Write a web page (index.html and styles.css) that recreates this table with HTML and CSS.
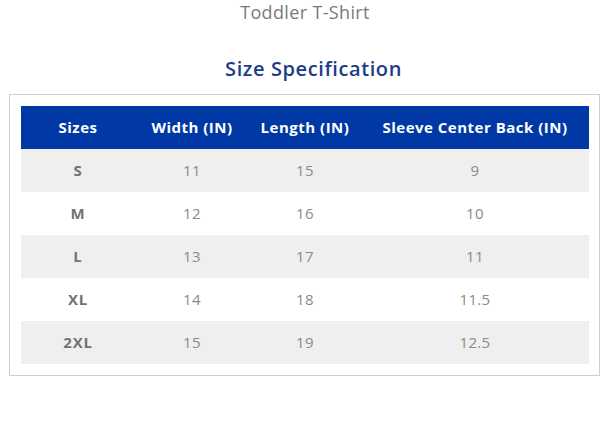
FILE: index.html
```html
<!DOCTYPE html>
<html>
<head>
<meta charset="utf-8">
<link rel="stylesheet" href="styles.css">
</head>
<body>
<div class="page">
  <div class="product">Toddler T-Shirt</div>
  <h2 class="heading">Size Specification</h2>
  <div class="box">
    <table class="spec">
      <thead>
        <tr><th class="c1">Sizes</th><th class="c2">Width (IN)</th><th class="c3">Length (IN)</th><th class="c4">Sleeve Center Back (IN)</th></tr>
      </thead>
      <tbody>
        <tr><td class="size">S</td><td>11</td><td>15</td><td>9</td></tr>
        <tr><td class="size">M</td><td>12</td><td>16</td><td>10</td></tr>
        <tr><td class="size">L</td><td>13</td><td>17</td><td>11</td></tr>
        <tr><td class="size">XL</td><td>14</td><td>18</td><td>11.5</td></tr>
        <tr><td class="size">2XL</td><td>15</td><td>19</td><td>12.5</td></tr>
      </tbody>
    </table>
  </div>
</div>
</body>
</html>
```
FILE: styles.css
```css
html, body { margin: 0; padding: 0; background: #fff; }
body { font-family: "Open Sans", "Liberation Sans", sans-serif; }
.page { padding: 0 11px 0 9px; }
.product {
  text-align: center;
  color: #7a7a7a;
  font-size: 18px;
  letter-spacing: 0.35px;
  line-height: 24px;
  margin: 0;
  padding-left: 1px;
}
.heading {
  text-align: center;
  color: #1c3c8a;
  font-size: 20px;
  font-weight: 600;
  letter-spacing: 0.6px;
  line-height: 26px;
  margin: 32px 0 12px;
  padding-left: 18px;
}
.box {
  border: 1px solid #cfcfcf;
  padding: 11px 10px 11px 11px;
}
.spec {
  width: 100%;
  border-collapse: collapse;
  table-layout: fixed;
}
.spec th {
  background: #0039a6;
  color: #fff;
  font-weight: 700;
  font-size: 15px;
  letter-spacing: 0.5px;
  height: 42px;
  padding: 0 0 1px;
  text-align: center;
}
.c1 { width: 114px; }
.c2 { width: 114px; }
.c3 { width: 112px; }
.spec td {
  height: 42px;
  padding: 0 0 1px;
  text-align: center;
  color: #8a8a8a;
  font-size: 15px;
  letter-spacing: 0.3px;
}
.spec td.size { font-weight: 700; color: #737373; letter-spacing: 0.8px; }
.spec tbody tr:nth-child(odd) td { background: #efefef; }
```
